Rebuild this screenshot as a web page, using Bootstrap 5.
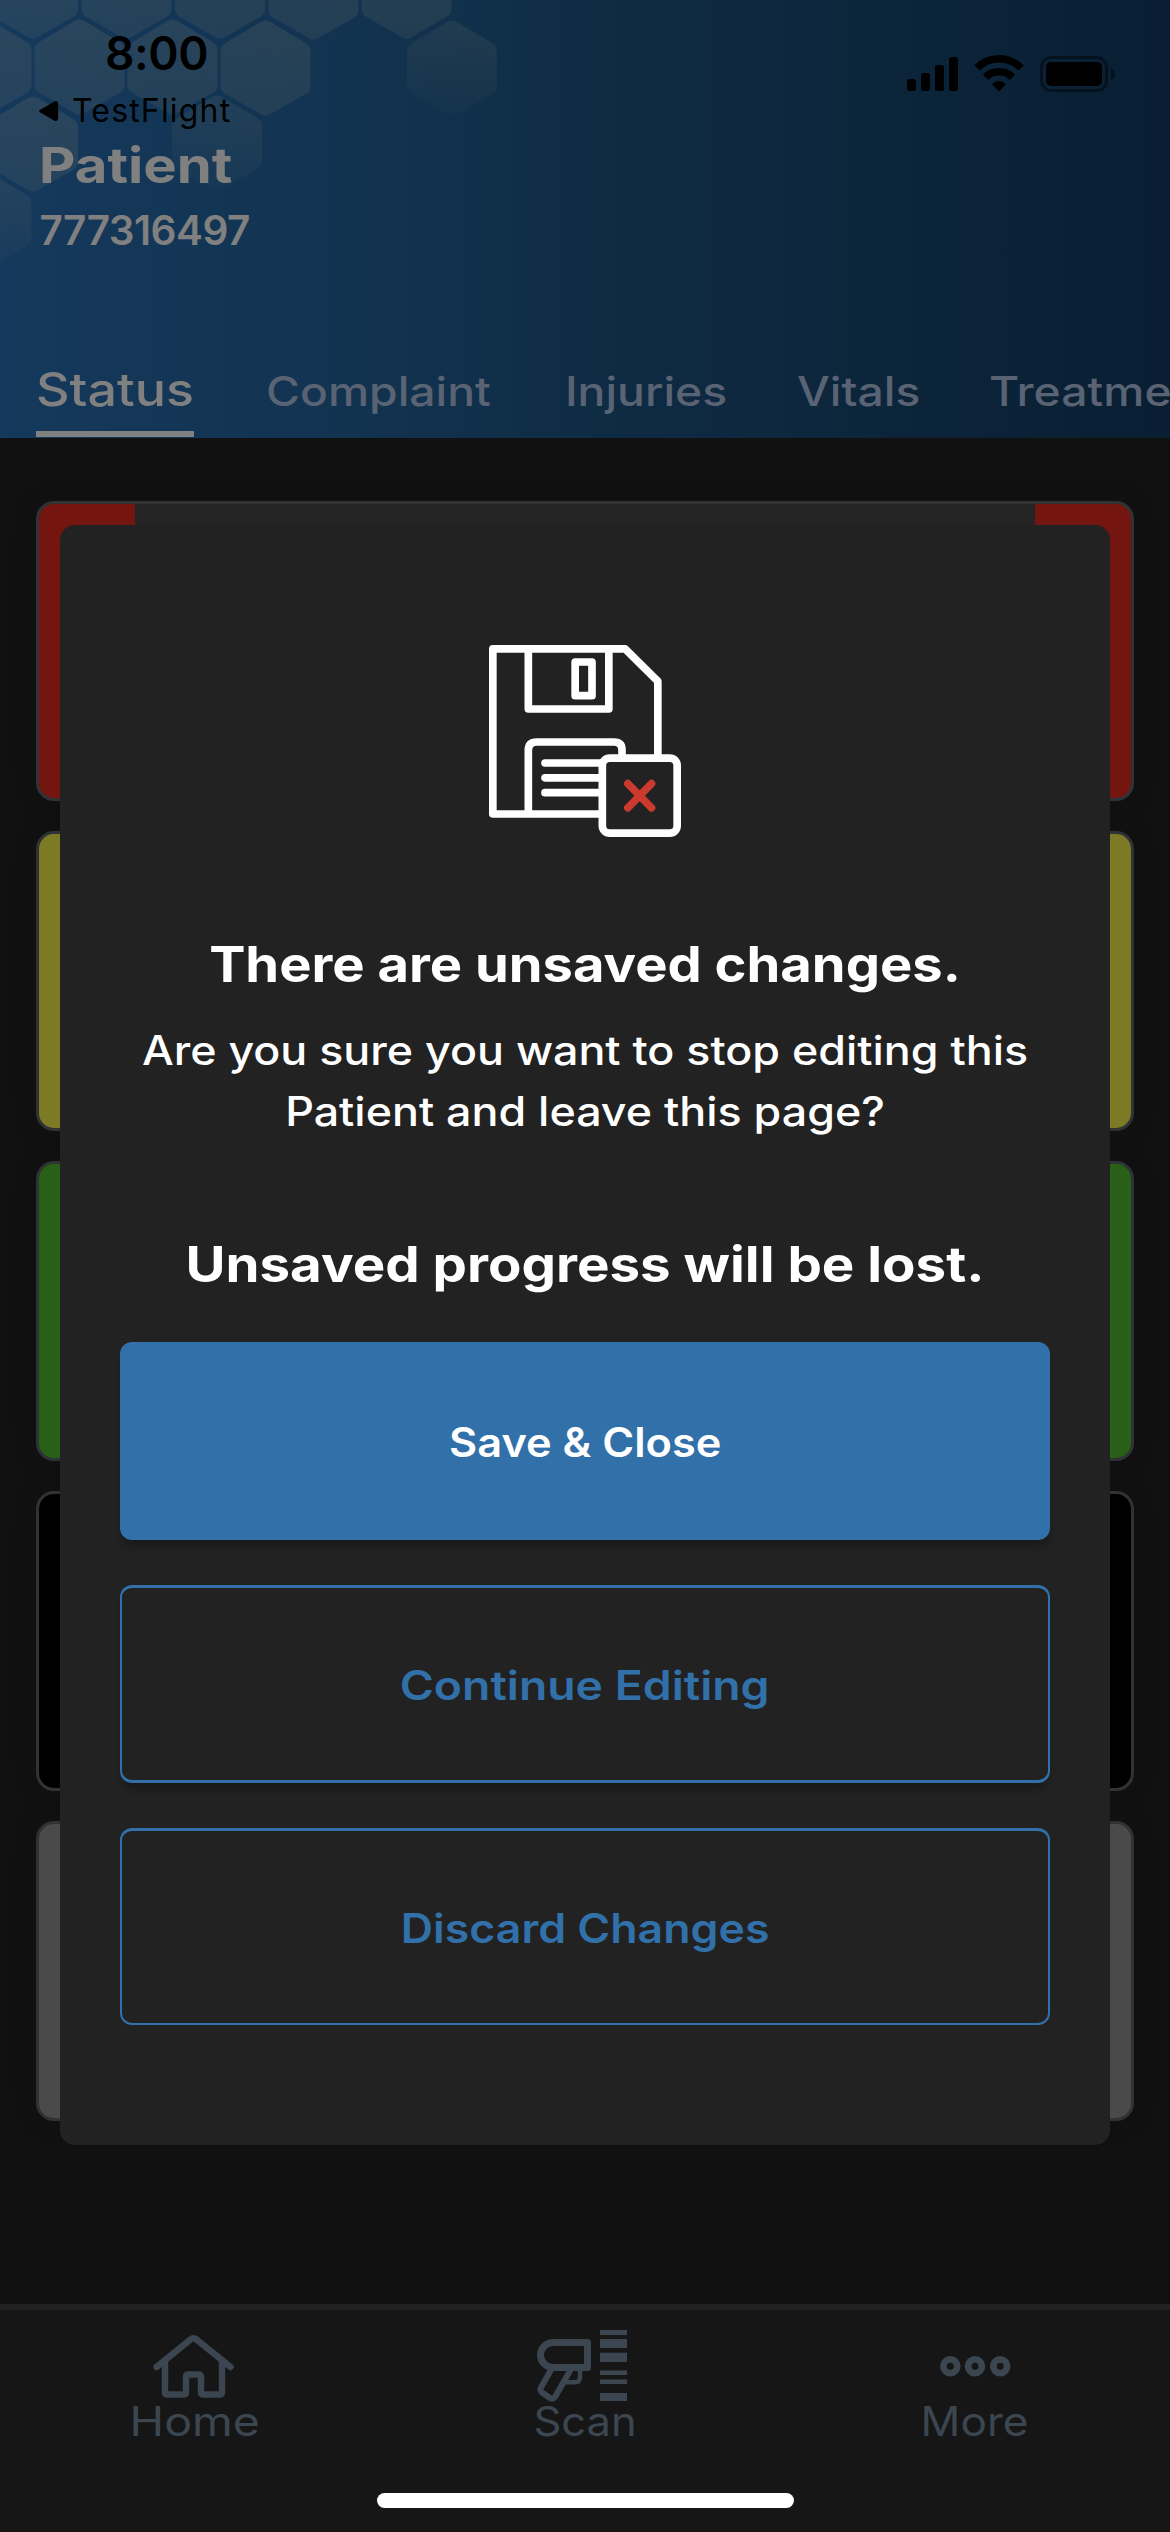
<!DOCTYPE html>
<html lang="en" data-bs-theme="dark">
<head>
<meta charset="utf-8">
<meta name="viewport" content="width=device-width, initial-scale=1">
<title>Patient status</title>
<link href="https://cdn.jsdelivr.net/npm/bootstrap@5.3.0/dist/css/bootstrap.min.css" rel="stylesheet">
<style>
  html, body { height: 2532px; overflow: hidden; }
  body { font-family: Inter, "Liberation Sans", sans-serif; background: #111; color: #fff; font-size: 40.5px; }
  .app-screen { height: 2532px; }

  .app-header { height: 438px; background: linear-gradient(90deg, #15395c 0%, #123350 30%, #0f2c45 50%, #0c253b 75%, #091e32 100%); color: #808080; }
  .hex-pattern { left: 0; top: 0; width: 560px; height: 300px; }
  .status-row { height: 116px; padding: 25px 54px 0 38px; color: #000; }
  .clock { font-size: 46px; font-weight: 600; line-height: 56px; letter-spacing: -.4px; padding-left: 67px; }
  .back-link { font-size: 32px; line-height: 40px; letter-spacing: 1.17px; margin-top: 10px; gap: 13px; }
  .status-icons { margin-top: 30px; }
  .patient-title { font-size: 49px; font-weight: 700; line-height: 60px; margin: 20px 0 10px 38.500px; color: #808080; transform: scaleX(1.148); transform-origin: left; }
  .patient-id { font-weight: 600; line-height: 50px; letter-spacing: -.54px; padding-left: 39.5px; }

  .tab-strip { height: 77px; padding-left: 36px; gap: 72px; }
  .tab-strip .nav-link { padding: 3px 0 0; line-height: 56px; font-weight: 500; color: #596373; white-space: nowrap; height: 76px; }
  .tab-strip .nav-link.active { padding: 0; font-size: 46px; color: #808080; border-bottom: 6px solid #808080; }
  .tab-strip span { display: inline-block; transform: scaleX(1.143); transform-origin: left; }
  .tab-strip .active span { transform: scaleX(1.13); }
  .w-status { width: 158px; } .w-complaint { width: 227px; } .w-injuries { width: 160px; } .w-vitals { width: 119.5px; } .w-treat { width: 181px; }

  .triage-list { padding: 63px 36px 0; gap: 30px; }
  .triage-card { height: 300px; border: 3px solid #2f3336; border-radius: 18px; box-shadow: 0 0 30px rgba(0,0,0,.12); }
  .t-red { background: linear-gradient(90deg, #74160f 96px, #242424 96px, #242424 996px, #74160f 996px); }
  .t-yellow { background: #7d7a26; } .t-green { background: #286018; } .t-black { background: #000; } .t-gray { background: #4a4a4a; }

  .bottom-bar { height: 228px; border-top: 6px solid #222; background: #161616; padding-top: 16px; color: #3b4650; }
  .bottom-bar svg { display: block; width: 120px; height: 76px; }
  .bottom-bar span { line-height: 50px; margin-top: -5px; }
  .x-home { transform: scaleX(1.148); } .x-scan { transform: scaleX(1.073); } .x-more { transform: scaleX(1.09); }
  .home-indicator { left: 377px; top: 2493px; width: 417px; height: 15px; border-radius: 8px; background: #fff; z-index: 2000; }

  .confirm-modal .modal-dialog { width: 1050px; max-width: none; margin: 525px auto 0; }
  .confirm-modal .modal-content { height: 1620px; background: #222; border: 0; border-radius: 15px; color: #fff; }
  .confirm-modal .modal-body { padding: 120px 60px; }
  .disk-icon { width: 192px; height: 192px; }
  .ask-title { font-size: 49px; font-weight: 700; line-height: 60px; margin: 98px 0 25px; transform: scaleX(1.108); }
  .ask-text { font-weight: 500; line-height: 61px; margin: 0 0 93px; transform: scaleX(1.106); }
  .ask-note { font-size: 49px; font-weight: 700; line-height: 60px; margin: 0 0 47px; transform: scaleX(1.115); }
  .ask-actions { gap: 45px; }
  .ask-actions .btn { --bs-btn-color: #3170a9; --bs-btn-border-color: #3170a9; height: 198px; padding: 4px 0 0; font-size: 40.5px; font-weight: 600; border-width: 3px 2px; border-radius: 12px; box-shadow: 0 9px 9px -3px rgba(0,0,0,.28); }
  .ask-actions .btn-fill { --bs-btn-color: #fff; --bs-btn-bg: #3170a9; }
  .ask-actions .btn-line { --bs-btn-bg: #222; }
  .ask-actions .btn-cut { height: 197px; border-bottom-width: 2px; box-shadow: none; }
  .ask-actions span { display: inline-block; transform: scaleX(1.144); }
  .ask-actions .btn-fill span { transform: scaleX(1.07); }
  .ask-actions .btn-cut span { transform: scaleX(1.103); }
</style>
</head>
<body>
<div class="app-screen d-flex flex-column position-relative overflow-hidden">

  <header class="app-header d-flex flex-column position-relative overflow-hidden">
    <svg class="hex-pattern position-absolute" viewBox="0 0 560 300" aria-hidden="true">
      <defs>
        <linearGradient id="hexFill" x1=".6" y1="0" x2=".4" y2="1">
          <stop offset="0" stop-color="#7a7a6a" stop-opacity=".21"/><stop offset="1" stop-color="#7a7a6a" stop-opacity=".15"/>
        </linearGradient>
        <linearGradient id="hexFade" x1=".6" y1="0" x2=".4" y2="1">
          <stop offset="0" stop-color="#7a7a6a" stop-opacity=".16"/><stop offset="1" stop-color="#7a7a6a" stop-opacity=".03"/>
        </linearGradient>
        <path id="hex" d="M-5 -46 Q0 -49 5 -46 L40 -25 Q45 -22 45 -16 V18 Q45 23 40 26 L5 46 Q0 49 -5 46 L-40 26 Q-45 23 -45 18 V-16 Q-45 -22 -40 -25Z"/>
      </defs>
      <g fill="url(#hexFill)">
        <use href="#hex" x="33" y="-9"/><use href="#hex" x="126.500" y="-9"/><use href="#hex" x="220" y="-9"/><use href="#hex" x="313.500" y="-8"/><use href="#hex" x="406.500" y="-9"/>
        <use href="#hex" x="-13.500" y="67"/><use href="#hex" x="79.500" y="67"/><use href="#hex" x="172.500" y="67"/><use href="#hex" x="265.500" y="68"/>
        <use href="#hex" x="33" y="144"/>
      </g>
      <g fill="url(#hexFade)">
        <use href="#hex" x="452" y="68"/><use href="#hex" x="217" y="143"/><use href="#hex" x="-13.500" y="220"/>
      </g>
    </svg>

    <div class="status-row d-flex justify-content-between align-items-start position-relative">
      <div class="d-flex flex-column">
        <div class="clock">8:00</div>
        <div class="back-link d-flex align-items-center">
          <svg width="21" height="22" viewBox="0 0 21 24"><path d="M1.500 10.500 L17 1.500 Q21 0 21 4 V20 Q21 24 17 22.500 L1.500 13.500 Q-1 12 1.500 10.500Z"/></svg>
          <span>TestFlight</span>
        </div>
      </div>
      <svg class="status-icons" width="209" height="37" viewBox="907 55 209 37">
        <rect x="907" y="79" width="9" height="12" rx="2.500"/><rect x="921" y="73" width="9" height="18" rx="2.500"/><rect x="935" y="65" width="9" height="26" rx="2.500"/><rect x="949" y="57" width="9" height="34" rx="2.500"/>
        <g fill="none" stroke="#000" stroke-width="7.500"><path d="M977 68 A31 31 0 0 1 1021 68"/><path d="M985.500 77.200 A19.500 19.500 0 0 1 1012.500 77.200"/></g>
        <path d="M992 84 Q999 78 1006 84 L1000 90.500 Q999 91.500 998 90.500Z"/>
        <rect x="1041.500" y="57.500" width="65" height="33" rx="9.500" fill="none" stroke="#000" stroke-opacity=".42" stroke-width="3"/>
        <rect x="1046" y="62" width="56" height="24" rx="5"/>
        <path d="M1111 68 Q1115 70 1115 74 Q1115 78 1111 80Z" fill-opacity=".45"/>
      </svg>
    </div>

    <h1 class="patient-title position-relative">Patient</h1>
    <div class="patient-id position-relative">777316497</div>

    <ul class="tab-strip nav flex-nowrap mt-auto position-relative">
      <li class="nav-item flex-shrink-0 w-status"><a class="nav-link active"><span>Status</span></a></li>
      <li class="nav-item flex-shrink-0 w-complaint"><a class="nav-link"><span>Complaint</span></a></li>
      <li class="nav-item flex-shrink-0 w-injuries"><a class="nav-link"><span>Injuries</span></a></li>
      <li class="nav-item flex-shrink-0 w-vitals"><a class="nav-link"><span>Vitals</span></a></li>
      <li class="nav-item flex-shrink-0 w-treat"><a class="nav-link"><span>Treatme</span></a></li>
    </ul>
  </header>

  <main class="triage-list d-flex flex-column flex-grow-1">
    <div class="triage-card t-red"></div>
    <div class="triage-card t-yellow"></div>
    <div class="triage-card t-green"></div>
    <div class="triage-card t-black"></div>
    <div class="triage-card t-gray"></div>
  </main>

  <footer class="bottom-bar">
    <div class="row g-0">
      <div class="col-4 d-flex flex-column align-items-center">
        <svg viewBox="0 0 120 76" fill="none" stroke="#3b4650" stroke-width="6.500" stroke-linecap="round" stroke-linejoin="round">
          <g transform="translate(18 8)">
            <path d="M12 28 V58 Q12 60.500 14.500 60.500 H30.500 Q33 60.500 33 58 V43 Q33 40.500 35.500 40.500 H45.500 Q48 40.500 48 43 V58 Q48 60.500 50.500 60.500 H66.500 Q69 60.500 69 58 V28"/>
            <path d="M3.500 33 L37.500 5.500 Q40.500 3 43.500 5.500 L77.500 33"/>
          </g>
        </svg>
        <span class="x-home">Home</span>
      </div>
      <div class="col-4 d-flex flex-column align-items-center">
        <svg viewBox="0 0 120 76" fill="none" stroke="#3b4650">
          <g transform="translate(10 2)">
            <path stroke-width="7" stroke-linejoin="round" d="M52.500 14.500 H18 A12.500 12.500 0 0 0 18 39.500 H52.500Z"/>
            <path stroke-width="6" stroke-linejoin="round" d="M16.500 41 L6 59.500 Q4.500 62.500 7 64.500 L15 70 Q18 71.500 20 69 L35.500 42"/>
            <path stroke-width="4.500" d="M45 42 V49 Q45 54.200 40 54.200 H30"/>
            <g fill="#3b4650" stroke="none">
              <rect x="65" y="2" width="27" height="5"/><rect x="65" y="11" width="27" height="9"/><rect x="65" y="24.700" width="27" height="9.300"/><rect x="65" y="42.500" width="27" height="4.500"/><rect x="65" y="51.500" width="27" height="4.500"/><rect x="65" y="65" width="27" height="8"/>
            </g>
          </g>
        </svg>
        <span class="x-scan">Scan</span>
      </div>
      <div class="col-4 d-flex flex-column align-items-center">
        <svg viewBox="0 0 120 76" fill="none" stroke="#3b4650" stroke-width="6.800">
          <circle cx="35.300" cy="40.300" r="6.900"/><circle cx="60" cy="40.300" r="6.900"/><circle cx="85.200" cy="40.300" r="6.900"/>
        </svg>
        <span class="x-more">More</span>
      </div>
    </div>
  </footer>

  <div class="home-indicator position-absolute"></div>
</div>

<div class="modal show d-block confirm-modal" tabindex="-1" role="dialog">
  <div class="modal-dialog">
    <div class="modal-content">
      <div class="modal-body text-center">
        <svg class="disk-icon d-block mx-auto" viewBox="57 75 576 576" fill="none" stroke="#fff" stroke-width="23" stroke-linejoin="round">
          <path d="M396 582 H68.500 V86.500 H465 L563.500 184 V410"/>
          <path d="M175 86 V267 H416.500 V86"/>
          <rect x="315.500" y="126" width="50.500" height="101"/>
          <path d="M175 582 V391 Q175 366 200 366 H432 Q456 366 456 390 V410"/>
          <path stroke-linecap="round" d="M225 429 H390 M225 473.500 H390 M225 518 H390"/>
          <rect x="397" y="414.500" width="224.500" height="225" rx="22"/>
          <path stroke="#cc3a2e" stroke-linecap="round" d="M473.500 491 L544.500 563.500 M544.500 491 L473.500 563.500"/>
        </svg>
        <h2 class="ask-title">There are unsaved changes.</h2>
        <p class="ask-text">Are you sure you want to stop editing this<br>Patient and leave this page?</p>
        <h2 class="ask-note">Unsaved progress will be lost.</h2>
        <div class="ask-actions d-grid">
          <button type="button" class="btn btn-fill"><span>Save &amp; Close</span></button>
          <button type="button" class="btn btn-line"><span>Continue Editing</span></button>
          <button type="button" class="btn btn-line btn-cut"><span>Discard Changes</span></button>
        </div>
      </div>
    </div>
  </div>
</div>
<script src="https://cdn.jsdelivr.net/npm/bootstrap@5.3.0/dist/js/bootstrap.bundle.min.js"></script>
</body>
</html>
